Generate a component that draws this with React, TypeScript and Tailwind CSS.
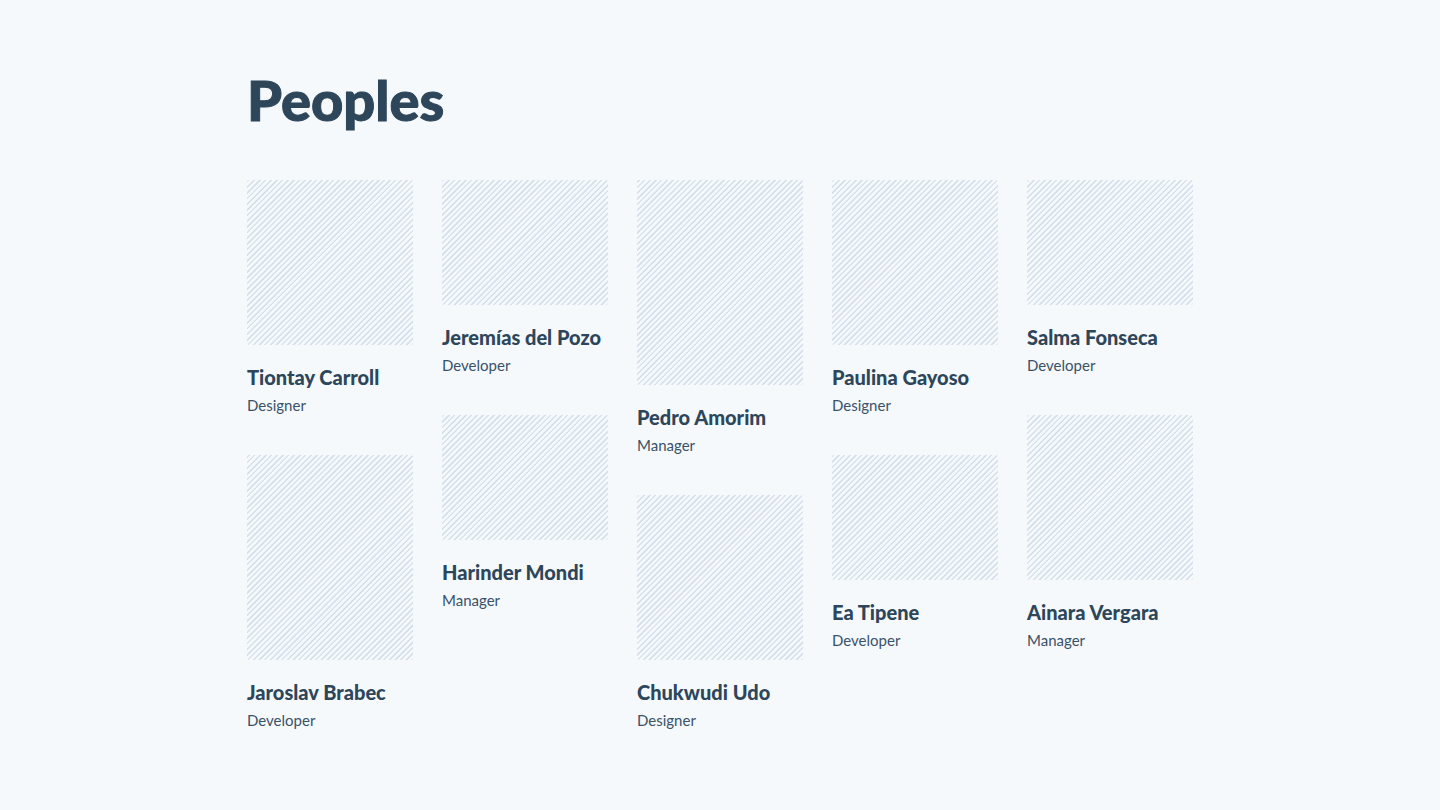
type Person = { name: string; role: string; photo: string };

const SHORT = "h-[125px]";
const MEDIUM = "h-[165px]";
const TALL = "h-[205px]";

const columns: Person[][] = [
  [
    { name: "Tiontay Carroll", role: "Designer", photo: MEDIUM },
    { name: "Jaroslav Brabec", role: "Developer", photo: TALL },
  ],
  [
    { name: "Jeremías del Pozo", role: "Developer", photo: SHORT },
    { name: "Harinder Mondi", role: "Manager", photo: SHORT },
  ],
  [
    { name: "Pedro Amorim", role: "Manager", photo: TALL },
    { name: "Chukwudi Udo", role: "Designer", photo: MEDIUM },
  ],
  [
    { name: "Paulina Gayoso", role: "Designer", photo: MEDIUM },
    { name: "Ea Tipene", role: "Developer", photo: SHORT },
  ],
  [
    { name: "Salma Fonseca", role: "Developer", photo: SHORT },
    { name: "Ainara Vergara", role: "Manager", photo: MEDIUM },
  ],
];

function PersonCard({ name, role, photo }: Person) {
  return (
    <article>
      <div
        className={`${photo} rounded-[2px] bg-[repeating-linear-gradient(-45deg,#d6e0ec_0px,#d6e0ec_1px,#f5f9fc_2px,#f5f9fc_4px)]`}
      />
      <h2 className="mt-[18px] whitespace-nowrap text-xl leading-7 font-black">{name}</h2>
      <p className="text-[15px] leading-7 text-[#3a5268]">{role}</p>
    </article>
  );
}

export default function App() {
  return (
    <main className="min-h-screen bg-[#f5f9fc] px-6 pt-16 pb-16 font-['Lato',sans-serif] text-[#2e465a]">
      <div className="mx-auto max-w-[946px]">
        <h1 className="text-[56px] leading-[72px] font-black [-webkit-text-stroke:1px_#2e465a]">Peoples</h1>
        <div className="mt-11 grid grid-cols-5 items-start gap-x-[29px]">
          {columns.map((people) => (
            <div key={people[0].name} className="flex flex-col gap-9">
              {people.map((person) => (
                <PersonCard key={person.name} {...person} />
              ))}
            </div>
          ))}
        </div>
      </div>
    </main>
  );
}
